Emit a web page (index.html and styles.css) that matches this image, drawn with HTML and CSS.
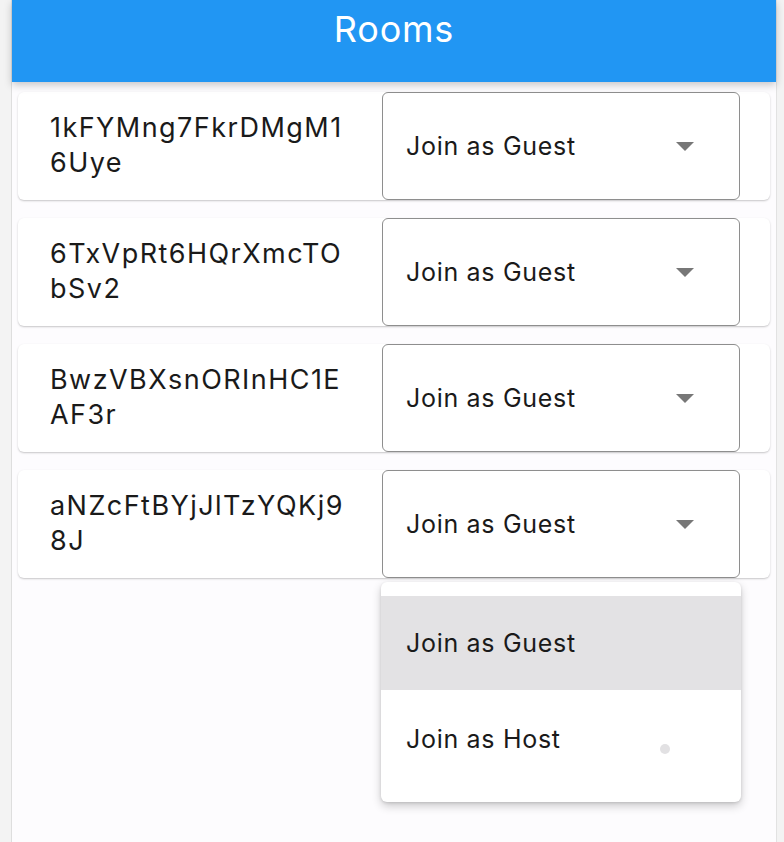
FILE: index.html
```html
<!DOCTYPE html>
<html>
<head>
<meta charset="utf-8">
<link rel="stylesheet" href="styles.css">
</head>
<body>
<div class="frame">
  <div class="side side-left"></div>
  <div class="main">
    <header class="appbar"><h1 class="title">Rooms</h1></header>
    <div class="list">
      <div class="card">
        <div class="room-id">1kFYMng7FkrDMgM1<br>6Uye</div>
        <div class="dropdown"><span class="dd-label">Join as Guest</span><span class="caret"></span></div>
      </div>
      <div class="card">
        <div class="room-id">6TxVpRt6HQrXmcTO<br>bSv2</div>
        <div class="dropdown"><span class="dd-label">Join as Guest</span><span class="caret"></span></div>
      </div>
      <div class="card">
        <div class="room-id">BwzVBXsnORInHC1E<br>AF3r</div>
        <div class="dropdown"><span class="dd-label">Join as Guest</span><span class="caret"></span></div>
      </div>
      <div class="card">
        <div class="room-id">aNZcFtBYjJlTzYQKj9<br>8J</div>
        <div class="dropdown"><span class="dd-label">Join as Guest</span><span class="caret"></span></div>
      </div>
    </div>
    <div class="menu">
      <div class="menu-item selected">Join as Guest</div>
      <div class="menu-item">Join as Host</div>
      <span class="ripple-dot"></span>
    </div>
  </div>
  <div class="side side-right"></div>
</div>
</body>
</html>
```

FILE: styles.css
```css
html, body {
  margin: 0;
  padding: 0;
  height: 100%;
}
body {
  font-family: Inter, "Noto Sans", sans-serif;
  color: #1a1a1a;
  background: #f3f3f3;
}
.frame {
  display: flex;
  height: 842px;
  overflow: hidden;
}
.side {
  background: #f3f3f3;
}
.side-left {
  width: 11px;
  border-right: 1px solid #dedede;
}
.side-right {
  width: 7px;
  border-left: 1px solid #e2e2e2;
}
.main {
  position: relative;
  flex: 1;
  background: #fdfcfe;
}
.appbar {
  height: 82px;
  background: #2196f3;
  display: flex;
  justify-content: center;
  box-shadow: 0 3px 8px rgba(0,0,0,0.22);
  position: relative;
  z-index: 1;
}
.title {
  margin: 0;
  padding-top: 7px;
  font-size: 36px;
  font-weight: 400;
  color: #fff;
  line-height: 44px;
  letter-spacing: 0.8px;
}
.list {
  display: flex;
  flex-direction: column;
  gap: 18px;
  padding: 10px 6px 0 6px;
}
.card {
  height: 108px;
  background: #fff;
  border-radius: 6px;
  box-shadow: 0 1px 2px rgba(0,0,0,0.22);
  display: flex;
  align-items: stretch;
}
.room-id {
  flex: 1;
  padding: 18px 0 0 32px;
  font-size: 27px;
  line-height: 35px;
  letter-spacing: 1.45px;
}
.dropdown {
  width: 358px;
  margin-right: 30px;
  box-sizing: border-box;
  border: 1.5px solid #8e8e8e;
  border-radius: 6px;
  display: flex;
  align-items: center;
  padding: 0 45px 0 23px;
}
.dd-label {
  flex: 1;
  font-size: 25px;
  letter-spacing: 0.7px;
}
.caret {
  width: 0;
  height: 0;
  border-left: 9px solid transparent;
  border-right: 9px solid transparent;
  border-top: 9px solid #777;
}
.menu {
  position: absolute;
  left: 369px;
  top: 582px;
  width: 360px;
  padding: 14px 0 16px;
  background: #fff;
  border-radius: 6px;
  box-shadow: 0 4px 10px rgba(0,0,0,0.2), 0 1px 3px rgba(0,0,0,0.12);
  z-index: 2;
}
.menu-item {
  height: 94px;
  display: flex;
  align-items: center;
  padding-left: 25px;
  font-size: 25px;
  letter-spacing: 0.7px;
}
.menu-item + .menu-item {
  padding-top: 2px;
}
.menu-item.selected {
  background: #e3e2e4;
}
.ripple-dot {
  position: absolute;
  left: 279px;
  top: 162px;
  width: 10px;
  height: 10px;
  border-radius: 50%;
  background: #e2e1e3;
}
```
